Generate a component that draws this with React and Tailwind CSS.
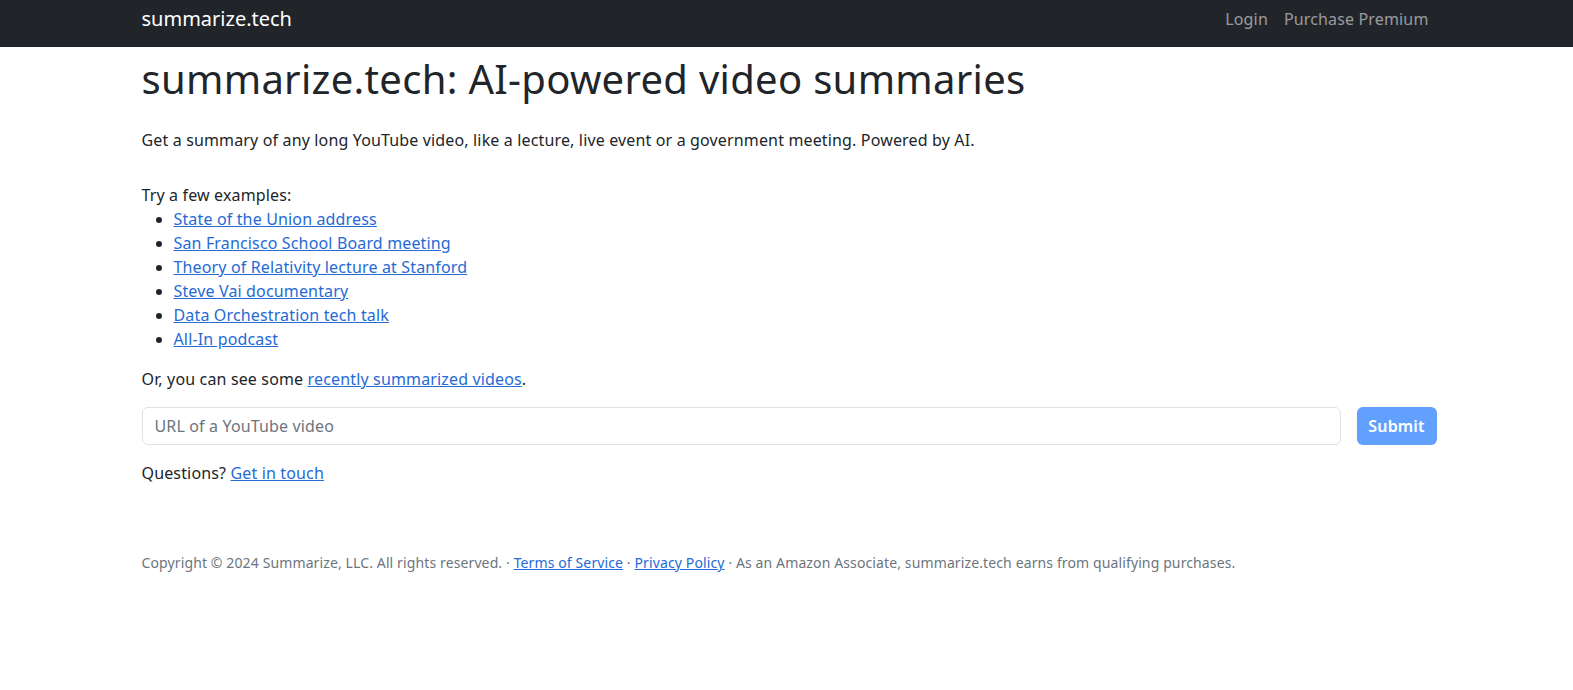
import React from 'react';

const examples = [
    'State of the Union address',
    'San Francisco School Board meeting',
    'Theory of Relativity lecture at Stanford',
    'Steve Vai documentary',
    'Data Orchestration tech talk',
    'All-In podcast',
];

function Navbar() {
    return (
        <nav className="bg-[#212529] h-[47px]">
            <div className="w-[1320px] mx-auto pl-[15px] pr-[10px] pt-1 flex items-start justify-between">
                <a href="#" className="text-white text-[20px] leading-[30px]">summarize.tech</a>
                <div className="flex items-center leading-[30px] tracking-[0.15px]">
                    <a href="#" className="px-2 text-[rgba(255,255,255,0.55)]">Login</a>
                    <a href="#" className="px-2 text-[rgba(255,255,255,0.55)]">Purchase Premium</a>
                </div>
            </div>
        </nav>
    );
}

export default function App() {
    return (
        <div className="min-h-screen bg-white text-[#212529] text-[16px] leading-[24px] font-['Noto_Sans','Open_Sans',sans-serif]">
            <Navbar />
            <main className="w-[1320px] mx-auto pl-[15px] pr-[10px] tracking-[0.15px]">
                <h1 className="mt-2 text-[40px] leading-[48px] font-normal tracking-[0.3px]">
                    summarize.tech: AI-powered video summaries
                </h1>
                <p className="mt-[25px]">
                    Get a summary of any long YouTube video, like a lecture, live event or a government meeting. Powered by AI.
                </p>
                <div className="mt-[31px]">
                    Try a few examples:
                    <ul className="list-disc pl-8">
                        {examples.map((ex) => (
                            <li key={ex}>
                                <a href="#" className="text-[#256ad6] underline">{ex}</a>
                            </li>
                        ))}
                    </ul>
                </div>
                <p className="mt-4">
                    Or, you can see some <a href="#" className="text-[#256ad6] underline">recently summarized videos</a>.
                </p>
                <form className="mt-4 flex gap-4" onSubmit={(e) => e.preventDefault()}>
                    <input
                        type="text"
                        placeholder="URL of a YouTube video"
                        className="flex-1 h-[38px] px-3 border border-[#dee2e6] rounded-[6px] placeholder:text-[#6c757d] outline-none"
                    />
                    <button
                        type="submit"
                        disabled
                        className="w-[80px] h-[38px] rounded-[6px] bg-[#61a1fd] text-white font-semibold"
                    >
                        Submit
                    </button>
                </form>
                <p className="mt-4">
                    Questions? <a href="#" className="text-[#256ad6] underline">Get in touch</a>
                </p>
                <footer className="mt-[67px] text-[14px] leading-[21px] text-[#6c757d] tracking-[0.12px]">
                    Copyright © 2024 Summarize, LLC. All rights reserved. ·{' '}
                    <a href="#" className="text-[#256ad6] underline">Terms of Service</a> ·{' '}
                    <a href="#" className="text-[#256ad6] underline">Privacy Policy</a> · As an Amazon Associate, summarize.tech earns from qualifying purchases.
                </footer>
            </main>
        </div>
    );
}
